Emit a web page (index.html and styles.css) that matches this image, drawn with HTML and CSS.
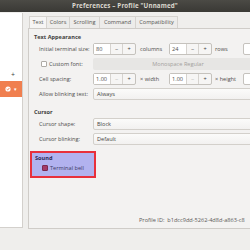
FILE: index.html
```html
<!DOCTYPE html>
<html>
<head>
<meta charset="utf-8">
<link rel="stylesheet" href="styles.css">
</head>
<body>
<div class="window">
  <div class="titlebar">Preferences – Profile "Unnamed"</div>
  <div class="main">
    <div class="sidebar">
      <div class="add-row">+</div>
      <div class="profile-row">
        <svg class="profile-icon" width="6" height="6" viewBox="0 0 6 6"><circle cx="3" cy="3" r="2.6" fill="#fff"/><path d="M1.7 3.1 L2.7 4 L4.4 2" stroke="#f07a4a" stroke-width="0.9" fill="none"/></svg>
        <span class="caret">▾</span>
      </div>
    </div>
    <div class="notebook">
      <div class="tabs">
        <div class="tab active w-text">Text</div>
        <div class="tab w-colors">Colors</div>
        <div class="tab w-scroll">Scrolling</div>
        <div class="tab w-command">Command</div>
        <div class="tab w-compat">Compatibility</div>
      </div>
      <div class="panel">
        <div class="heading first">Text Appearance</div>
        <div class="row">
          <div class="label">Initial terminal size:</div>
          <div class="spin"><span class="entry">80</span><span class="btn">−</span><span class="btn">+</span></div>
          <span class="unit u-columns">columns</span>
          <div class="spin"><span class="entry">24</span><span class="btn">−</span><span class="btn">+</span></div>
          <span class="unit u-rows">rows</span>
          <div class="ghost"></div>
        </div>
        <div class="row">
          <div class="label check-label"><span class="check"></span>Custom font:</div>
          <div class="fontbtn">Monospace Regular</div>
        </div>
        <div class="row">
          <div class="label">Cell spacing:</div>
          <div class="spin"><span class="entry">1.00</span><span class="btn dim">−</span><span class="btn">+</span></div>
          <span class="unit u-width">× width</span>
          <div class="spin"><span class="entry">1.00</span><span class="btn dim">−</span><span class="btn">+</span></div>
          <span class="unit u-height">× height</span>
          <div class="ghost"></div>
        </div>
        <div class="row">
          <div class="label">Allow blinking text:</div>
          <div class="combo">Always</div>
        </div>
        <div class="heading second">Cursor</div>
        <div class="row">
          <div class="label">Cursor shape:</div>
          <div class="combo">Block</div>
        </div>
        <div class="row">
          <div class="label">Cursor blinking:</div>
          <div class="combo">Default</div>
        </div>
        <div class="sound">
          <div class="sound-title">Sound</div>
          <div class="sound-row"><span class="check checked"></span>Terminal bell</div>
        </div>
        <div class="profile-id">Profile ID:&nbsp; b1dcc9dd-5262-4d8d-a863-c8</div>
      </div>
    </div>
  </div>
</div>
</body>
</html>
```
FILE: styles.css
```css
html, body {
  margin: 0;
  padding: 0;
}
body {
  width: 250px;
  height: 250px;
  overflow: hidden;
  background: #efeeec;
  font-family: "Open Sans", "Noto Sans", sans-serif;
  font-size: 5.6px;
  color: #4a4a48;
}
.window {
  width: 250px;
  height: 250px;
  overflow: hidden;
}
.titlebar {
  height: 12px;
  line-height: 12px;
  background: linear-gradient(#4b4a45, #3a3935);
  color: #dcd8cf;
  font-weight: bold;
  text-align: center;
  font-size: 6.2px;
  letter-spacing: 0.15px;
  white-space: nowrap;
}
.main {
  display: flex;
  align-items: flex-start;
}
.sidebar {
  margin-top: 1px;
  width: 23px;
  height: 215px;
  background: #ffffff;
  border-right: 1px solid #d3d0cc;
  border-bottom: 1px solid #d3d0cc;
  box-sizing: border-box;
  padding-top: 56px;
  flex: none;
}
.add-row {
  height: 12px;
  line-height: 12px;
  text-align: right;
  padding-right: 7px;
  font-size: 7px;
  color: #3c3c3c;
}
.profile-row {
  height: 16px;
  background: #f07f4f;
  display: flex;
  align-items: center;
  padding-left: 5px;
  gap: 3px;
}
.profile-icon { display: block; }
.caret {
  color: #fff;
  font-size: 5px;
}
.notebook {
  margin-left: 5px;
  margin-top: 4px;
  flex: none;
  width: 240px;
}
.tabs {
  display: flex;
  height: 12px;
  padding-left: 1px;
}
.tab {
  box-sizing: border-box;
  height: 12px;
  line-height: 11px;
  text-align: center;
  border-top: 1px solid #d6d3cf;
  border-right: 1px solid #d6d3cf;
  background: #edecea;
  color: #565653;
  white-space: nowrap;
}
.tab.active {
  background: #f6f5f4;
  border-left: 1px solid #d6d3cf;
}
.w-text { width: 18px; }
.w-colors { width: 23px; }
.w-scroll { width: 30px; }
.w-command { width: 36px; }
.w-compat { width: 42px; }
.panel {
  box-sizing: border-box;
  height: 201px;
  border: 1px solid #cfccc8;
  border-right: none;
  background: #f3f2f1;
  padding-left: 5px;
}
.heading {
  font-weight: bold;
  color: #3e3e3c;
  height: 8px;
  line-height: 8px;
}
.heading.first { margin-top: 4px; }
.heading.second { margin-top: 7px; }
.row {
  display: flex;
  align-items: center;
  height: 15px;
  white-space: nowrap;
}
.label {
  width: 59px;
  padding-left: 5px;
  box-sizing: border-box;
  flex: none;
  color: #4d4d4b;
}
.check-label {
  display: flex;
  align-items: center;
  padding-left: 7px;
}
.check {
  width: 4px;
  height: 4px;
  border: 1px solid #aeaba6;
  background: #fff;
  border-radius: 1px;
  margin-right: 2px;
  flex: none;
}
.spin {
  display: flex;
  height: 12px;
  box-sizing: border-box;
  border: 1px solid #c5c2bd;
  border-radius: 2px;
  background: #f6f5f4;
  flex: none;
}
.entry {
  width: 17px;
  background: #fff;
  line-height: 10px;
  padding-left: 2px;
  box-sizing: border-box;
  border-right: 1px solid #d6d3cf;
  color: #505050;
}
.btn {
  width: 12px;
  text-align: center;
  line-height: 10px;
  color: #3c3c3c;
  border-right: 1px solid #d6d3cf;
  box-sizing: border-box;
}
.btn:last-child { border-right: none; }
.btn.dim { color: #b5b3af; }
.unit { color: #4d4d4b; flex: none; }
.u-columns { margin-left: 4px; width: 29px; }
.u-rows { margin-left: 3px; width: 28px; }
.u-width { margin-left: 4px; width: 29px; }
.u-height { margin-left: 3px; width: 28px; }
.ghost {
  width: 20px;
  height: 12px;
  box-sizing: border-box;
  border: 1px solid #c5c2bd;
  border-radius: 2px;
  background: #fff;
  flex: none;
}
.fontbtn {
  flex: none;
  width: 170px;
  height: 12px;
  line-height: 12px;
  box-sizing: border-box;
  background: #e7e6e4;
  border-radius: 2px;
  color: #a3a19d;
  text-align: center;
}
.combo {
  flex: none;
  width: 170px;
  height: 12px;
  line-height: 10px;
  box-sizing: border-box;
  border: 1px solid #d3d0cb;
  border-radius: 2px;
  background: linear-gradient(#fbfbfa, #f2f1f0);
  padding-left: 3px;
  color: #454543;
}
.sound {
  margin-top: 5px;
  margin-left: -4px;
  width: 66px;
  height: 27px;
  box-sizing: border-box;
  border: 2px solid #e8303c;
  background: #b2b2ef;
  padding-left: 3px;
}
.sound-title {
  font-weight: bold;
  color: #2c2a55;
  margin-top: 1px;
  height: 8px;
  line-height: 8px;
}
.sound-row {
  display: flex;
  align-items: center;
  height: 11px;
  padding-left: 7px;
  color: #3c3a66;
}
.check.checked {
  background: #a43a68;
  border-color: #7c2a50;
}
.profile-id {
  margin-top: 38px;
  margin-left: 105px;
  white-space: nowrap;
  line-height: 8px;
  color: #5a5a58;
}
```
